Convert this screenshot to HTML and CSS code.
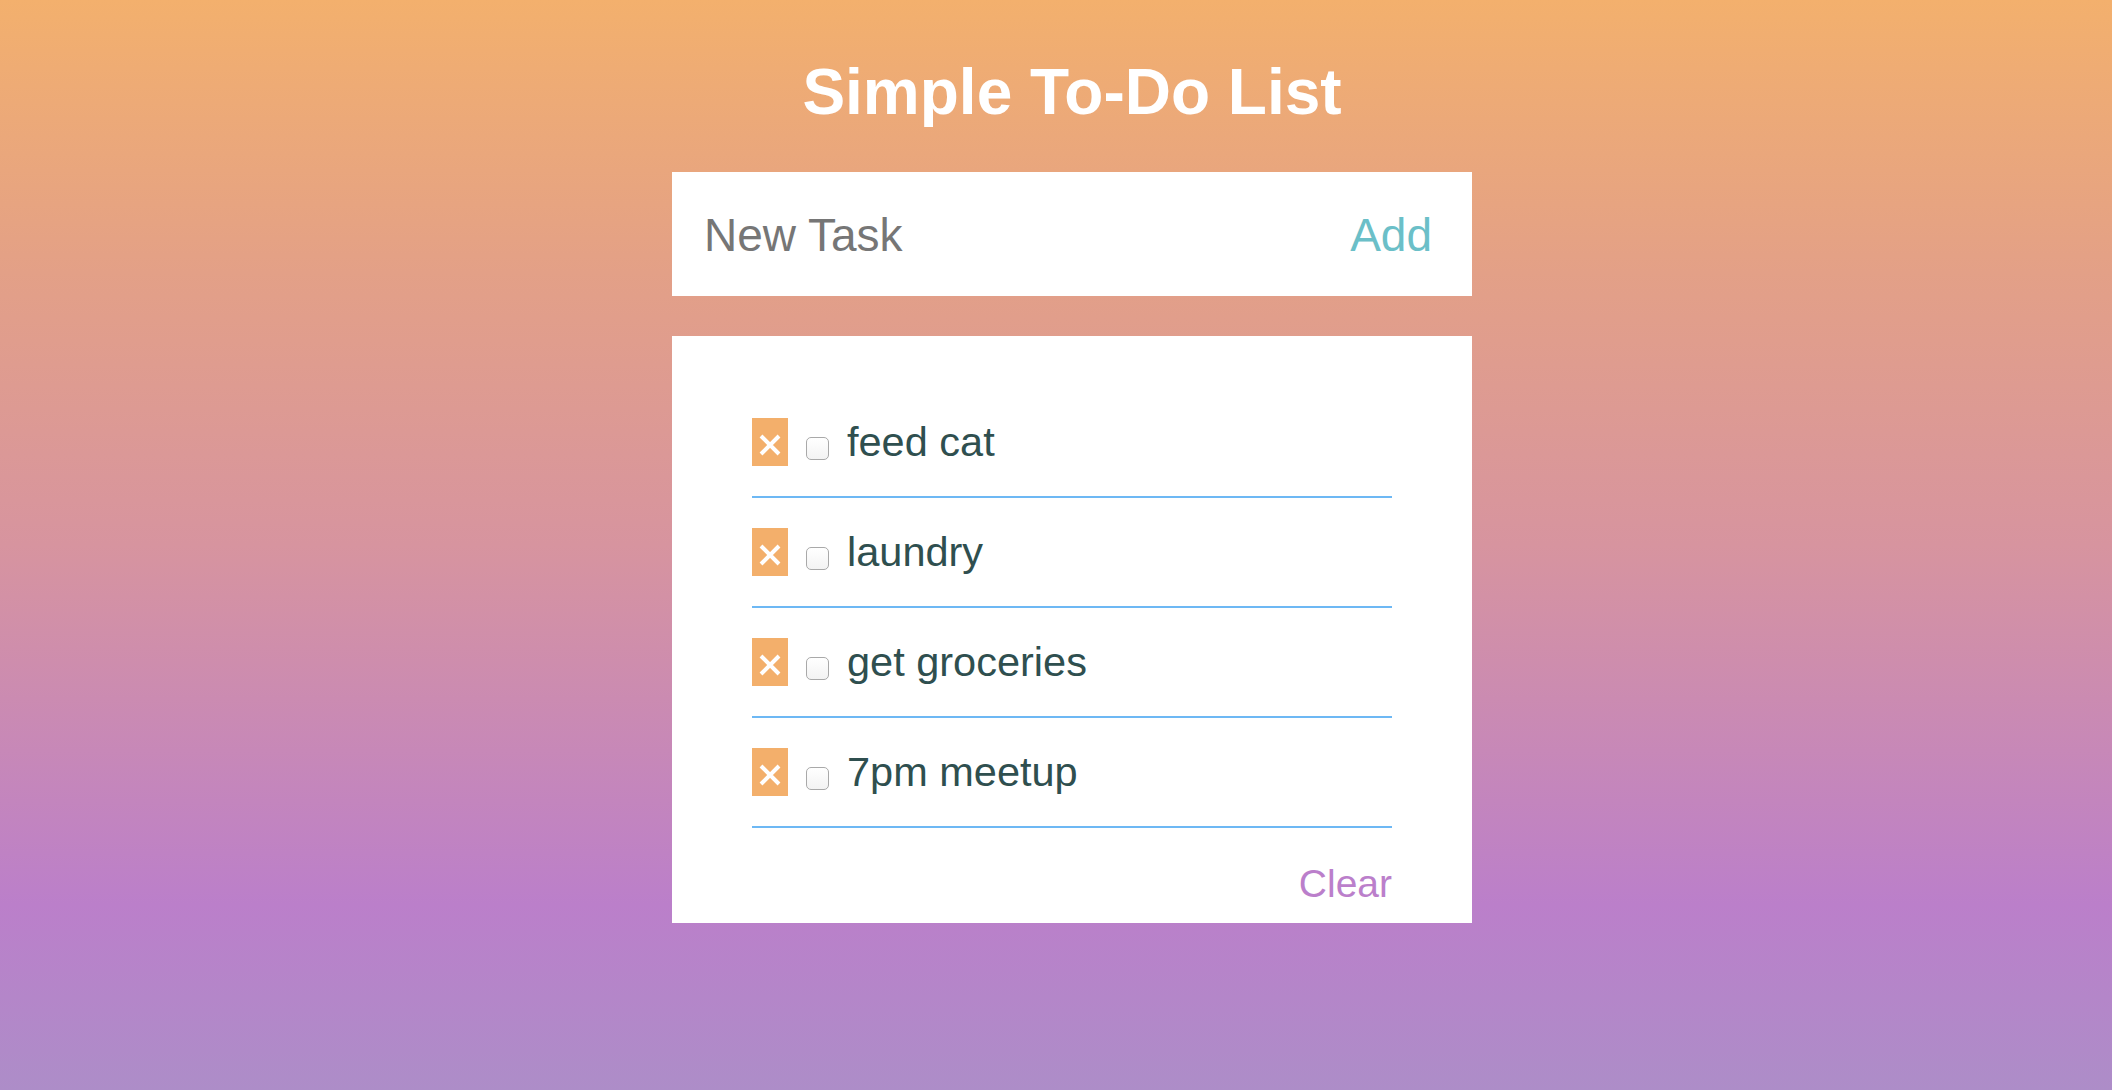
FILE: index.html
```html
<!DOCTYPE html>
<html lang="en">
<head>
<meta charset="utf-8">
<title>Simple To-Do List</title>
<link rel="stylesheet" href="styles.css">
</head>
<body>
<div class="page">
  <h1 class="title">Simple To-Do List</h1>
  <form class="new-task">
    <input class="task-input" type="text" placeholder="New Task">
    <button class="add-btn" type="button">Add</button>
  </form>
  <div class="list-card">
    <ul class="task-list">
      <li class="task">
        <button class="remove" type="button" aria-label="remove"><svg viewBox="0 0 22 22" width="22" height="22"><path d="M2 2 L20 20 M20 2 L2 20" stroke="#fff" stroke-width="4" stroke-linecap="butt"/></svg></button>
        <input class="check" type="checkbox">
        <span class="task-text">feed cat</span>
      </li>
      <li class="task">
        <button class="remove" type="button" aria-label="remove"><svg viewBox="0 0 22 22" width="22" height="22"><path d="M2 2 L20 20 M20 2 L2 20" stroke="#fff" stroke-width="4" stroke-linecap="butt"/></svg></button>
        <input class="check" type="checkbox">
        <span class="task-text">laundry</span>
      </li>
      <li class="task">
        <button class="remove" type="button" aria-label="remove"><svg viewBox="0 0 22 22" width="22" height="22"><path d="M2 2 L20 20 M20 2 L2 20" stroke="#fff" stroke-width="4" stroke-linecap="butt"/></svg></button>
        <input class="check" type="checkbox">
        <span class="task-text">get groceries</span>
      </li>
      <li class="task">
        <button class="remove" type="button" aria-label="remove"><svg viewBox="0 0 22 22" width="22" height="22"><path d="M2 2 L20 20 M20 2 L2 20" stroke="#fff" stroke-width="4" stroke-linecap="butt"/></svg></button>
        <input class="check" type="checkbox">
        <span class="task-text">7pm meetup</span>
      </li>
    </ul>
    <div class="list-footer">
      <button class="clear-btn" type="button">Clear</button>
    </div>
  </div>
</div>
</body>
</html>
```
FILE: styles.css
```css
html, body {
  margin: 0;
  padding: 0;
  height: 100%;
}
body {
  background: linear-gradient(180deg, #f3b06d 0%, #e3a087 25%, #d7949f 50%, #bb7fca 83%, #ad8dc8 100%);
  font-family: "Liberation Sans", Arial, Helvetica, sans-serif;
  overflow: hidden;
}
.page {
  padding: 55px 0 0 32px;
  display: flex;
  flex-direction: column;
  align-items: center;
}
.title {
  margin: 0;
  font-size: 64px;
  line-height: 74px;
  font-weight: 700;
  color: #fff;
}
.new-task {
  margin-top: 43px;
  width: 800px;
  height: 124px;
  box-sizing: border-box;
  background: #fff;
  display: flex;
  align-items: center;
  padding: 2px 40px 0 32px;
}
.task-input {
  flex: 1;
  border: none;
  outline: none;
  padding: 0;
  margin: 0;
  font-family: inherit;
  font-size: 46px;
  color: #333;
  background: transparent;
}
.task-input::placeholder {
  color: #767676;
  opacity: 1;
}
.add-btn {
  border: none;
  background: none;
  padding: 0;
  margin: 0;
  font-family: inherit;
  font-size: 46px;
  color: #6bbfc8;
  cursor: pointer;
}
.list-card {
  margin-top: 40px;
  width: 800px;
  box-sizing: border-box;
  background: #fff;
  padding: 52px 80px 17px;
}
.task-list {
  list-style: none;
  margin: 0;
  padding: 0;
}
.task {
  display: flex;
  align-items: center;
  padding: 30px 0;
  border-bottom: 2px solid #6db8f4;
}
.remove {
  width: 36px;
  height: 48px;
  border: none;
  padding: 0;
  margin: 0;
  background: #f3af6b;
  display: flex;
  align-items: center;
  justify-content: center;
  cursor: pointer;
  flex: none;
}
.remove svg {
  display: block;
  margin-top: 6px;
}
.check {
  appearance: none;
  -webkit-appearance: none;
  width: 23px;
  height: 23px;
  box-sizing: border-box;
  margin: 12px 0 0 18px;
  border: 1.5px solid #a9a9a9;
  border-radius: 5px;
  background: linear-gradient(180deg, #ffffff 0%, #f3f3f3 100%);
  flex: none;
}
.task-text {
  margin-left: 18px;
  font-size: 41.5px;
  line-height: 48px;
  color: #2f4f4f;
}
.list-footer {
  margin-top: 34px;
  text-align: right;
}
.clear-btn {
  border: none;
  background: none;
  padding: 0;
  margin: 0;
  font-family: inherit;
  font-size: 39px;
  color: #bb7fcb;
  cursor: pointer;
}
```
